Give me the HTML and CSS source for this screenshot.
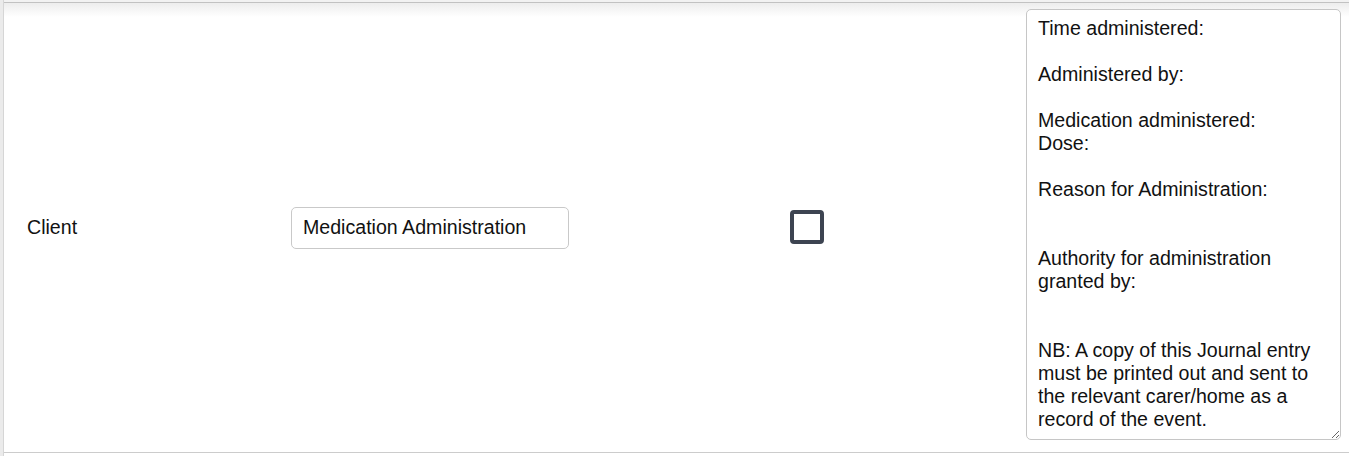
FILE: index.html
```html
<!DOCTYPE html>
<html>
<head>
<meta charset="utf-8">
<link rel="stylesheet" href="styles.css">
</head>
<body>
<div class="page">
  <div class="gutter"></div>
  <div class="main">
    <div class="table">
      <div class="row">
        <div class="cell label">Client</div>
        <div class="cell"><input class="text-input" type="text" value="Medication Administration"></div>
        <div class="cell"><span class="checkbox"></span></div>
        <div class="cell last"><textarea class="notes">Time administered:

Administered by:

Medication administered:
Dose:

Reason for Administration:


Authority for administration granted by:


NB: A copy of this Journal entry must be printed out and sent to the relevant carer/home as a record of the event.</textarea></div>
      </div>
    </div>
  </div>
</div>
</body>
</html>
```
FILE: styles.css
```css
html, body {
  margin: 0;
  padding: 0;
  background: #fff;
}
body {
  font-family: "Liberation Sans", Arial, sans-serif;
  color: #111;
}
.page {
  display: flex;
  height: 456px;
}
.gutter {
  width: 3px;
  background: #ebebeb;
  border-right: 1px solid #d6d6d6;
}
.main {
  flex: 1;
  padding-top: 2px;
  background: linear-gradient(#f2f2f2, #f2f2f2) top / 100% 2px no-repeat, #fff;
}
.table {
  border-top: 1px solid #c2c2c2;
  background: linear-gradient(#ededed, #ffffff 14px) top / 100% 14px no-repeat, #fff;
}
.row {
  display: grid;
  grid-template-columns: 264px 499px 236px 1fr;
  align-items: center;
  padding: 6px 0 6px 11px;
  border-bottom: 1px solid #cccccc;
}
.cell {
  padding: 0 12px;
}
.cell.last {
  padding: 0 8px 6px 12px;
}
.label {
  font-size: 19.6px;
}
.text-input {
  box-sizing: border-box;
  display: block;
  width: 278px;
  height: 42px;
  margin: 0;
  padding: 0 11px;
  border: 1px solid #c9c9c9;
  border-radius: 5px;
  font-family: "Liberation Sans", Arial, sans-serif;
  font-size: 19.6px;
  color: #111;
  background: #fff;
  outline: none;
}
.checkbox {
  display: block;
  box-sizing: border-box;
  width: 34px;
  height: 34px;
  border: 4px solid #3d4451;
  border-radius: 4px;
  background: #fff;
  margin-top: -1px;
}
.notes {
  box-sizing: border-box;
  display: block;
  width: 315px;
  height: 431px;
  margin: 0;
  padding: 7px 11px 6px;
  border: 1px solid #c6c6c6;
  border-radius: 5px;
  font-family: "Liberation Sans", Arial, sans-serif;
  font-size: 19.6px;
  line-height: 23px;
  color: #111;
  background: #fff;
  resize: vertical;
  overflow: hidden;
  outline: none;
}
```
